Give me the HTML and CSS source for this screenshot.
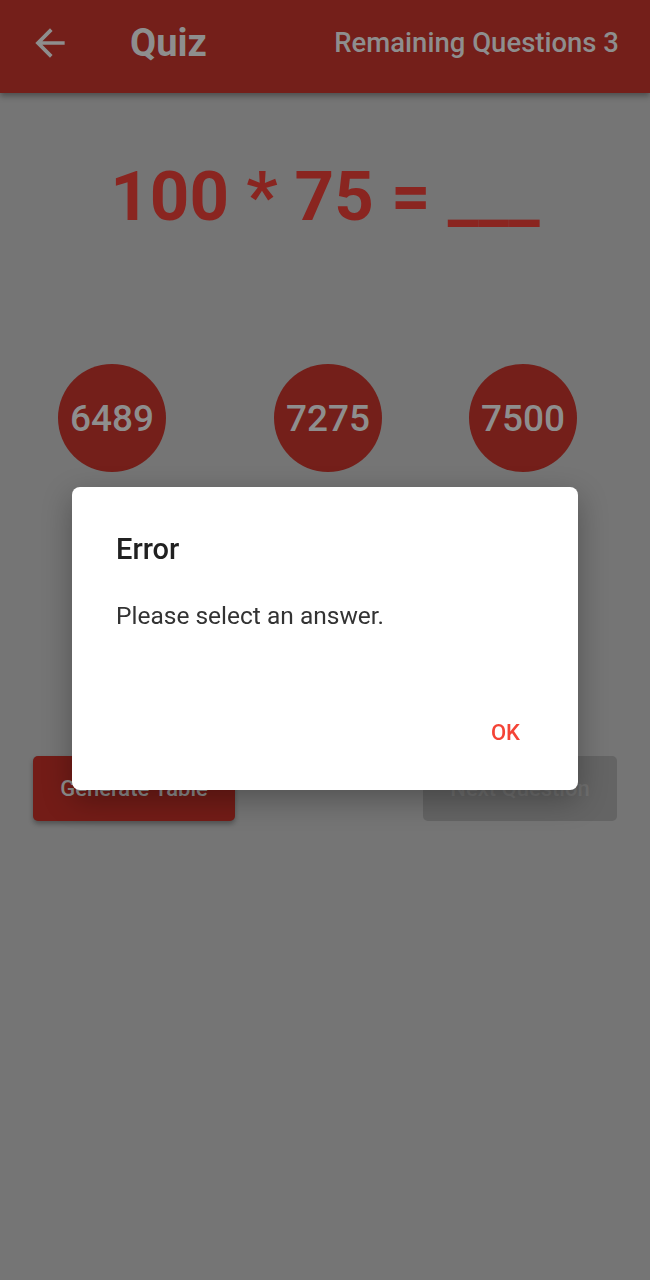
FILE: index.html
```html
<!DOCTYPE html>
<html>
<head>
<meta charset="utf-8">
<link rel="stylesheet" href="styles.css">
</head>
<body>
<div class="screen">
  <header class="appbar">
    <svg class="back" viewBox="0 0 24 24" width="44" height="44"><path d="M20 11H7.83l5.59-5.59L12 4l-8 8 8 8 1.41-1.41L7.83 13H20v-2z" fill="#8e8e8e"/></svg>
    <div class="title">Quiz</div>
    <div class="remaining">Remaining Questions 3</div>
  </header>
  <div class="equation">100 * 75 = ___</div>
  <div class="choices">
    <div class="choice c1">6489</div>
    <div class="choice c2">7275</div>
    <div class="choice c3">7500</div>
  </div>
  <div class="actions">
    <div class="btn btn-red">Generate Table</div>
    <div class="btn btn-gray">Next Question</div>
  </div>
</div>
<div class="scrim">
  <div class="dialog">
    <div class="dlg-title">Error</div>
    <div class="dlg-body">Please select an answer.</div>
    <div class="dlg-actions"><span class="ok">OK</span></div>
  </div>
</div>
</body>
</html>
```
FILE: styles.css
```css
html, body {
  margin: 0;
  padding: 0;
}
body {
  width: 650px;
  height: 1280px;
  background: #757575;
  font-family: Roboto, "Noto Sans", sans-serif;
  overflow: hidden;
}
.screen {
  display: flex;
  flex-direction: column;
}
.appbar {
  height: 93px;
  box-sizing: border-box;
  padding-bottom: 8px;
  background: #741f1a;
  display: flex;
  align-items: center;
  box-shadow: 0 3px 6px rgba(0,0,0,0.35);
  position: relative;
}
.back {
  margin-left: 28px;
}
.title {
  margin-left: 58px;
  font-size: 38px;
  font-weight: 700;
  color: #8e8e8e;
}
.remaining {
  margin-left: auto;
  margin-right: 31px;
  font-size: 27.5px;
  font-weight: 500;
  color: #8e8e8e;
}
.equation {
  margin-top: 62px;
  text-align: center;
  font-size: 69px;
  font-weight: 700;
  color: #8a2520;
  line-height: 84px;
}
.choices {
  display: flex;
  margin-top: 125px;
  padding-left: 58px;
}
.choice {
  width: 108px;
  height: 108px;
  border-radius: 50%;
  background: #741f1a;
  color: #8e8e8e;
  font-size: 37px;
  font-weight: 500;
  display: flex;
  align-items: center;
  justify-content: center;
}
.c2 { margin-left: 108px; }
.c3 { margin-left: 87px; }
.actions {
  display: flex;
  justify-content: space-between;
  padding: 0 33px;
  margin-top: 284px;
}
.btn {
  height: 65px;
  border-radius: 5px;
  display: flex;
  align-items: center;
  justify-content: center;
  font-size: 22px;
  font-weight: 500;
}
.btn-red {
  width: 202px;
  background: #731c17;
  color: #8e8e8e;
  box-shadow: 0 3px 5px rgba(0,0,0,0.3);
}
.btn-gray {
  width: 194px;
  background: #646464;
  color: #707070;
}
.scrim {
  position: fixed;
  inset: 0;
  display: flex;
  align-items: center;
  justify-content: center;
}
.dialog {
  width: 506px;
  height: 303px;
  margin-top: -3px;
  background: #ffffff;
  border-radius: 8px;
  box-shadow: 0 10px 30px rgba(0,0,0,0.3);
  box-sizing: border-box;
  padding: 44px 44px 0 44px;
  display: flex;
  flex-direction: column;
}
.dlg-title {
  font-size: 29px;
  font-weight: 500;
  color: #212121;
  line-height: 36px;
}
.dlg-body {
  margin-top: 34px;
  font-size: 24.5px;
  color: #333333;
  line-height: 30px;
}
.dlg-actions {
  margin-top: auto;
  margin-bottom: 45px;
  display: flex;
  justify-content: flex-end;
  padding-right: 14px;
}
.ok {
  font-size: 22px;
  font-weight: 500;
  color: #f44336;
}
```
